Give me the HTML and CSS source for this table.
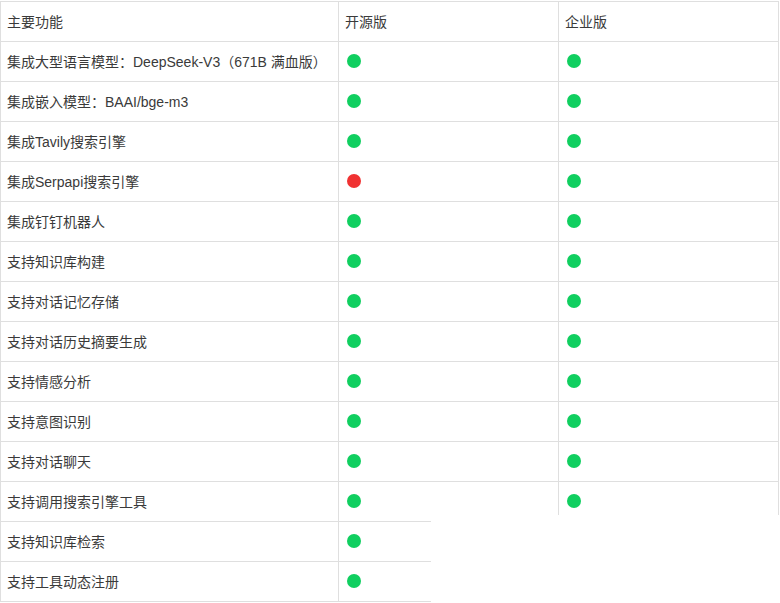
FILE: index.html
```html
<!DOCTYPE html>
<html lang="zh-CN">
<head>
<meta charset="utf-8">
<link rel="stylesheet" href="styles.css">
</head>
<body>
<div class="wrap">
<table class="cmp">
<colgroup><col class="c1"><col class="c2"><col class="c3"></colgroup>
<thead>
<tr><th>主要功能</th><th>开源版</th><th>企业版</th></tr>
</thead>
<tbody>
<tr><td>集成大型语言模型：DeepSeek-V3（671B 满血版）</td><td><span class="dot yes"></span></td><td><span class="dot yes"></span></td></tr>
<tr><td>集成嵌入模型：BAAI/bge-m3</td><td><span class="dot yes"></span></td><td><span class="dot yes"></span></td></tr>
<tr><td>集成Tavily搜索引擎</td><td><span class="dot yes"></span></td><td><span class="dot yes"></span></td></tr>
<tr><td>集成Serpapi搜索引擎</td><td><span class="dot no"></span></td><td><span class="dot yes"></span></td></tr>
<tr><td>集成钉钉机器人</td><td><span class="dot yes"></span></td><td><span class="dot yes"></span></td></tr>
<tr><td>支持知识库构建</td><td><span class="dot yes"></span></td><td><span class="dot yes"></span></td></tr>
<tr><td>支持对话记忆存储</td><td><span class="dot yes"></span></td><td><span class="dot yes"></span></td></tr>
<tr><td>支持对话历史摘要生成</td><td><span class="dot yes"></span></td><td><span class="dot yes"></span></td></tr>
<tr><td>支持情感分析</td><td><span class="dot yes"></span></td><td><span class="dot yes"></span></td></tr>
<tr><td>支持意图识别</td><td><span class="dot yes"></span></td><td><span class="dot yes"></span></td></tr>
<tr><td>支持对话聊天</td><td><span class="dot yes"></span></td><td><span class="dot yes"></span></td></tr>
<tr><td>支持调用搜索引擎工具</td><td><span class="dot yes"></span></td><td><span class="dot yes"></span></td></tr>
<tr><td>支持知识库检索</td><td><span class="dot yes"></span></td><td><span class="dot yes"></span></td></tr>
<tr><td>支持工具动态注册</td><td><span class="dot yes"></span></td><td><span class="dot yes"></span></td></tr>
</tbody>
</table>
<div class="mask"></div>
</div>
</body>
</html>
```
FILE: styles.css
```css
html, body {
  margin: 0;
  padding: 0;
  background: #fff;
}
.wrap {
  position: relative;
  padding-top: 1px;
  width: 780px;
  height: 602px;
  overflow: hidden;
}
.cmp {
  border-collapse: collapse;
  table-layout: fixed;
  width: 778px;
  font-family: "Liberation Sans", "Noto Sans CJK SC", sans-serif;
  font-size: 14px;
  color: #3a3a3a;
}
.c1 { width: 338px; }
.c2 { width: 220px; }
.c3 { width: 220px; }
.cmp th, .cmp td {
  border: 1px solid #dfdfdf;
  height: 40px;
  padding: 0 6px 2px;
  text-align: left;
  font-weight: normal;
  vertical-align: middle;
  white-space: nowrap;
  box-sizing: border-box;
}
.dot {
  display: block;
  width: 14px;
  height: 14px;
  border-radius: 50%;
  margin-left: 2px;
}
.dot.yes { background: #10cf60; }
.dot.no { background: #f03232; }
.mask {
  position: absolute;
  left: 431px;
  top: 515px;
  right: 0;
  bottom: 0;
  background: #fff;
}
```
